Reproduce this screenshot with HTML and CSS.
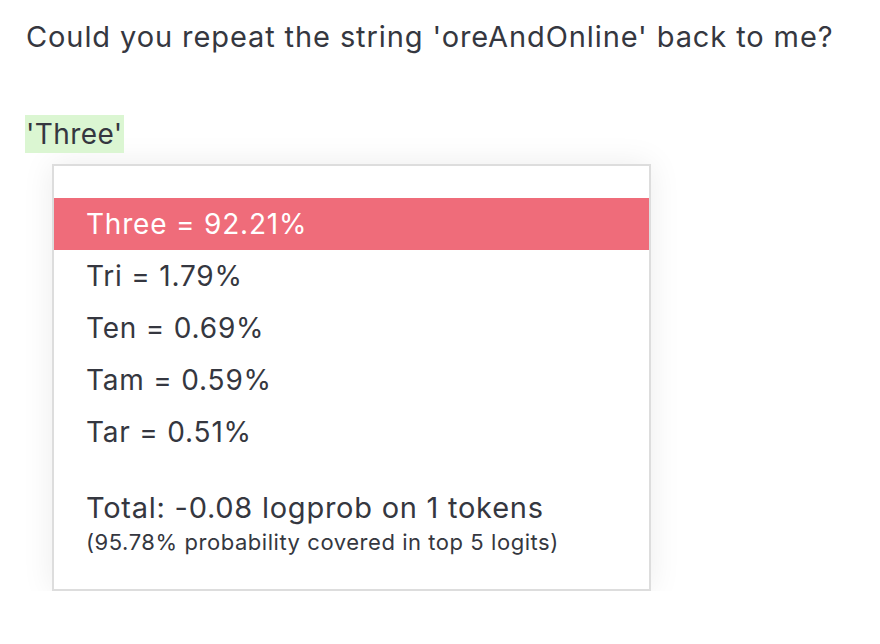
FILE: index.html
```html
<!DOCTYPE html>
<html>
<head>
<meta charset="utf-8">
<link rel="stylesheet" href="styles.css">
</head>
<body>
<div class="page">
  <p class="question">Could you repeat the string 'oreAndOnline' back to me?</p>
  <p class="answer"><span class="hl">'Three'</span></p>
  <div class="popup">
    <ul class="rows">
      <li class="row active">Three = 92.21%</li>
      <li class="row">Tri = 1.79%</li>
      <li class="row">Ten = 0.69%</li>
      <li class="row">Tam = 0.59%</li>
      <li class="row">Tar = 0.51%</li>
    </ul>
    <div class="total">
      <div class="total-main">Total: -0.08 logprob on 1 tokens</div>
      <div class="total-sub">(95.78% probability covered in top 5 logits)</div>
    </div>
  </div>
</div>
</body>
</html>
```
FILE: styles.css
```css
html, body {
  margin: 0;
  padding: 0;
  background: #ffffff;
}
body {
  font-family: Inter, "Liberation Sans", sans-serif;
  color: #353740;
}
.page {
  padding: 17px 0 0 26px;
}
.question {
  margin: 0;
  font-size: 29px;
  line-height: 40px;
  letter-spacing: 0.9px;
}
.answer {
  margin: 58px 0 0 -1px;
  font-size: 28px;
  line-height: 38px;
  letter-spacing: 0.4px;
}
.hl {
  display: inline-block;
  background: #dbf6d2;
  padding: 0 1px;
}
.popup {
  margin: 11px 0 0 26px;
  width: 595px;
  border: 2px solid #dddddd;
  background: #ffffff;
  box-shadow: 0 0 30px rgba(0, 0, 0, 0.08);
  padding: 32px 0 0 0;
  height: 391px;
}
.rows {
  list-style: none;
  margin: 0;
  padding: 0;
}
.row {
  height: 52px;
  line-height: 52px;
  padding-left: 32px;
  font-size: 28px;
  letter-spacing: 0.8px;
}
.row.active {
  background: #ef6c7a;
  color: #ffffff;
}
.total {
  padding: 30px 0 0 32px;
}
.total-main {
  font-size: 29px;
  line-height: 40px;
  letter-spacing: 0.75px;
}
.total-sub {
  font-size: 22px;
  line-height: 28px;
  letter-spacing: 0.55px;
}
```
